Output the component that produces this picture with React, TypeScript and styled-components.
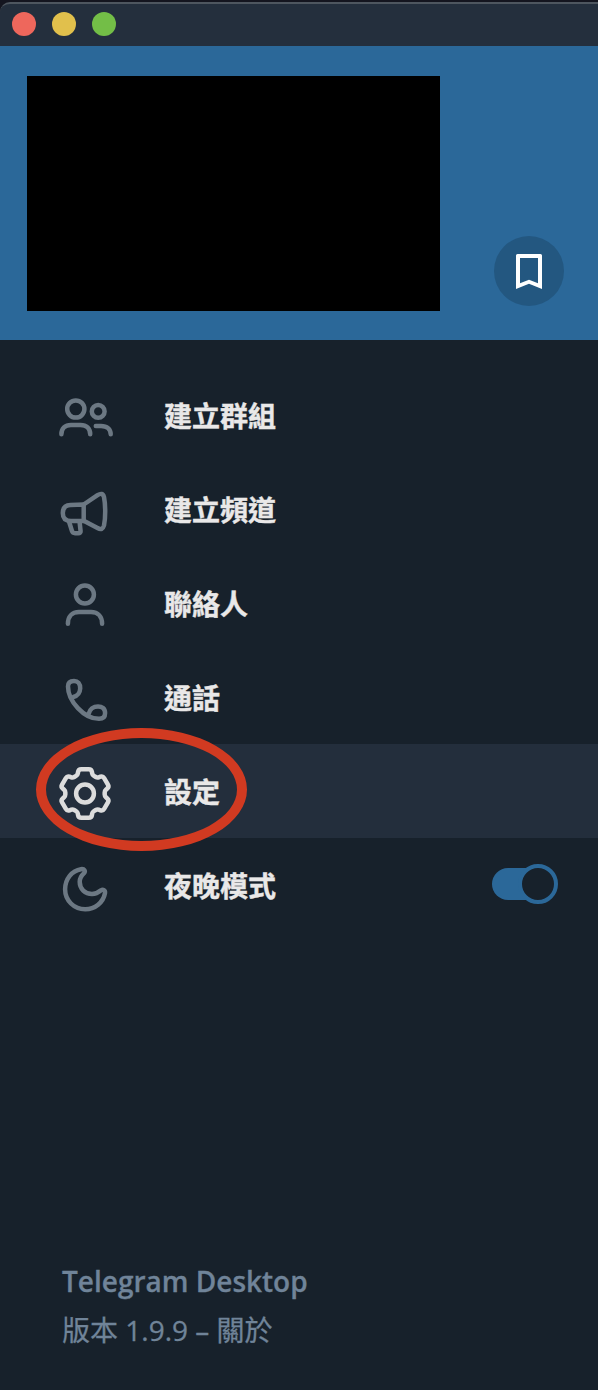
import React from "react";
import styled, { createGlobalStyle } from "styled-components";

const Global = createGlobalStyle`
  * { box-sizing: border-box; }
  body { margin: 0; background: #17212b; }
`;

const Window = styled.div`
  position: relative;
  width: 598px;
  height: 1390px;
  display: flex;
  flex-direction: column;
  background: #17212b;
  font-family: "Open Sans", "Noto Sans CJK TC", sans-serif;
  overflow: hidden;
`;

const Desktop = styled.div`
  background: #14151f;
  padding-top: 2px;
`;

const TitleBar = styled.div`
  height: 44px;
  display: flex;
  align-items: center;
  gap: 16px;
  padding: 0 12px 2px;
  background: #242f3d;
  border-top: 2px solid #4e565f;
  border-top-left-radius: 10px;
`;

const Light = styled.span<{ $color: string }>`
  width: 24px;
  height: 24px;
  border-radius: 50%;
  background: ${(p) => p.$color};
`;

const Cover = styled.header`
  height: 294px;
  display: flex;
  justify-content: space-between;
  align-items: flex-end;
  padding: 0 34px 29px 27px;
  background: #2b6899;
`;

const Redacted = styled.div`
  width: 413px;
  height: 235px;
  background: #000;
`;

const SavedButton = styled.button`
  width: 70px;
  height: 70px;
  margin: 0 0 5px;
  padding: 0;
  border: 0;
  border-radius: 50%;
  display: grid;
  place-items: center;
  background: #235780;
`;

const Menu = styled.nav`
  flex: 1;
  display: flex;
  flex-direction: column;
  padding-top: 28px;
`;

const Item = styled.div<{ $active?: boolean }>`
  height: 94px;
  display: flex;
  align-items: center;
  padding: 0 40px 0 50px;
  background: ${(p) => (p.$active ? "#232e3c" : "transparent")};
  color: ${(p) => (p.$active ? "#dcdcdc" : "#6c7883")};
`;

const ItemIcon = styled.svg`
  width: 70px;
  height: 94px;
  fill: none;
  stroke: currentColor;
  stroke-width: 4.5;
  stroke-linecap: round;
  stroke-linejoin: round;
`;

const Label = styled.span`
  flex: 1;
  margin-left: 44px;
  font-family: "Noto Sans CJK TC", sans-serif;
  font-size: 28px;
  line-height: 40px;
  font-weight: 700;
  color: #e9e8e8;
  -webkit-text-stroke: 0.4px #e9e8e8;
`;

const Knob = styled.span`
  flex: none;
  width: 40px;
  height: 40px;
  margin-left: -24px;
  border-radius: 50%;
  border: 4px solid #2b6899;
  background: #17212b;
`;

const Switch = styled.span`
  display: flex;
  align-items: center;
  width: 66px;
  height: 40px;
  margin-bottom: 2px;

  &::before {
    content: "";
    width: 50px;
    height: 32px;
    border-radius: 16px;
    background: #2b6899;
  }
`;

const Footer = styled.footer`
  display: flex;
  flex-direction: column;
  gap: 1px;
  padding: 0 62px 36px;
  font-size: 28px;
  line-height: 48px;
  color: #708499;
  -webkit-text-stroke: 0.3px #708499;
`;

const AppName = styled.span`
  font-weight: 600;
`;

const Version = styled.span`
  font-weight: 400;
`;

const Highlight = styled.div`
  position: absolute;
  left: 36px;
  top: 728px;
  width: 211px;
  height: 123px;
  border: 10px solid #d13a21;
  border-radius: 50%;
`;

const gearPath = (() => {
  // One tooth as [x, outward distance, corner rounding], repeated six times.
  const tooth = [
    [-7.5, 18.4, 1.6],
    [-6.4, 24.3, 2.6],
    [6.4, 24.3, 2.6],
    [7.5, 18.4, 1.6],
  ];
  const pts: number[][] = [];
  for (let k = 0; k < 6; k++) {
    const a = (k * Math.PI) / 3;
    tooth.forEach(([x, y, r]) =>
      pts.push([
        35 + x * Math.cos(a) + y * Math.sin(a),
        49.5 + x * Math.sin(a) - y * Math.cos(a),
        r,
      ])
    );
  }
  const toward = (p: number[], q: number[]) => {
    const l = Math.hypot(q[0] - p[0], q[1] - p[1]);
    const t = Math.min(p[2] / l, 0.5);
    return `${(p[0] + (q[0] - p[0]) * t).toFixed(2)} ${(p[1] + (q[1] - p[1]) * t).toFixed(2)}`;
  };
  return (
    pts
      .map((p, i) => {
        const prev = pts[(i + pts.length - 1) % pts.length];
        const next = pts[(i + 1) % pts.length];
        return `${i ? "L" : "M"}${toward(p, prev)} Q${p[0].toFixed(2)} ${p[1].toFixed(2)} ${toward(p, next)}`;
      })
      .join(" ") + "Z"
  );
})();

const items: { label: string; icon: React.ReactNode; active?: boolean; toggle?: boolean }[] = [
  {
    label: "建立群組",
    icon: (
      <>
        <circle cx="25.8" cy="41" r="8.6" />
        <circle cx="48.2" cy="43.4" r="6.4" />
        <path d="M11.4 66.2C11.4 60.5 15 56.9 21 56.9H30.5C36.5 56.9 40.2 60.5 40.2 66.2" />
        <path d="M45.8 57.9H51C57 57.9 60.7 61 60.7 66.2" />
      </>
    ),
  },
  {
    label: "建立頻道",
    icon: (
      <>
        <path d="M33.7 42.5L20.5 43C15 43.2 12.8 46 12.8 51C12.8 56 15.5 59 21 59H33.7Z" />
        <path d="M33.7 42.5L47.5 33.2C51 31 53 31.5 54 35C55.6 43 55.6 56 54 63.5C53 67 51 68 47.5 66L33.7 58.8" />
        <path d="M19 59.5L22 69.2C22.5 70.7 23.5 71.2 25 71.2H28.3C30 71.2 30.7 70.3 30.6 69.2L29.6 60" />
      </>
    ),
  },
  {
    label: "聯絡人",
    icon: (
      <>
        <circle cx="34.9" cy="38.5" r="9" />
        <path d="M17.9 67.8C17.9 60.5 22 56.1 29 56.1H41C48 56.1 52.1 60.5 52.1 67.8" />
      </>
    ),
  },
  {
    label: "通話",
    icon: (
      <path d="M23.3 47C27.5 46 30 42.5 30.2 38.5C30.3 33.5 28 31 24 31C19.8 31 18 32.7 18 36.5C18 51 34 68.8 49 68.8C53.3 68.8 55.1 67 55.1 63C55.1 58.5 52 56.4 48 56.4C43.5 56.4 39.8 59 38.8 63.6" />
    ),
  },
  {
    label: "設定",
    active: true,
    icon: (
      <>
        <circle cx="35" cy="49.5" r="8.9" />
        <path d={gearPath} />
      </>
    ),
  },
  {
    label: "夜晚模式",
    toggle: true,
    icon: (
      <path d="M31 31.2C22 32.5 15.1 41 15.1 51.3C15.1 62.5 24 71.3 35.2 71.3C45 71.3 53.3 64.5 55 55C55.4 52.3 53 51 51 52.3C48.5 54.5 45.5 56 42 56C35 56 29.7 50.8 29.7 43.8C29.7 40.5 31.5 37.5 34 35.2C35.7 33.3 34.5 30.7 31 31.2Z" />
    ),
  },
];

export default function App() {
  return (
    <Window>
      <Global />
      <Desktop>
        <TitleBar>
          <Light $color="#ee675c" />
          <Light $color="#e1c04c" />
          <Light $color="#73be47" />
        </TitleBar>
      </Desktop>
      <Cover>
        <Redacted />
        <SavedButton aria-label="儲存的訊息">
          <svg width="26" height="35" viewBox="0 0 26 35">
            <path
              fill="#fff"
              fillRule="evenodd"
              d="M1.5 0H24.5Q26 0 26 1.5V35L13 29.8L0 35V1.5Q0 0 1.5 0ZM4 4V29.2L13 25.8L22 29.2V4Z"
            />
          </svg>
        </SavedButton>
      </Cover>
      <Menu>
        {items.map((item) => (
          <Item key={item.label} $active={item.active}>
            <ItemIcon viewBox="0 0 70 94">{item.icon}</ItemIcon>
            <Label>{item.label}</Label>
            {item.toggle && (
              <Switch>
                <Knob />
              </Switch>
            )}
          </Item>
        ))}
      </Menu>
      <Footer>
        <AppName>Telegram Desktop</AppName>
        <Version>版本 1.9.9 – 關於</Version>
      </Footer>
      <Highlight />
    </Window>
  );
}
